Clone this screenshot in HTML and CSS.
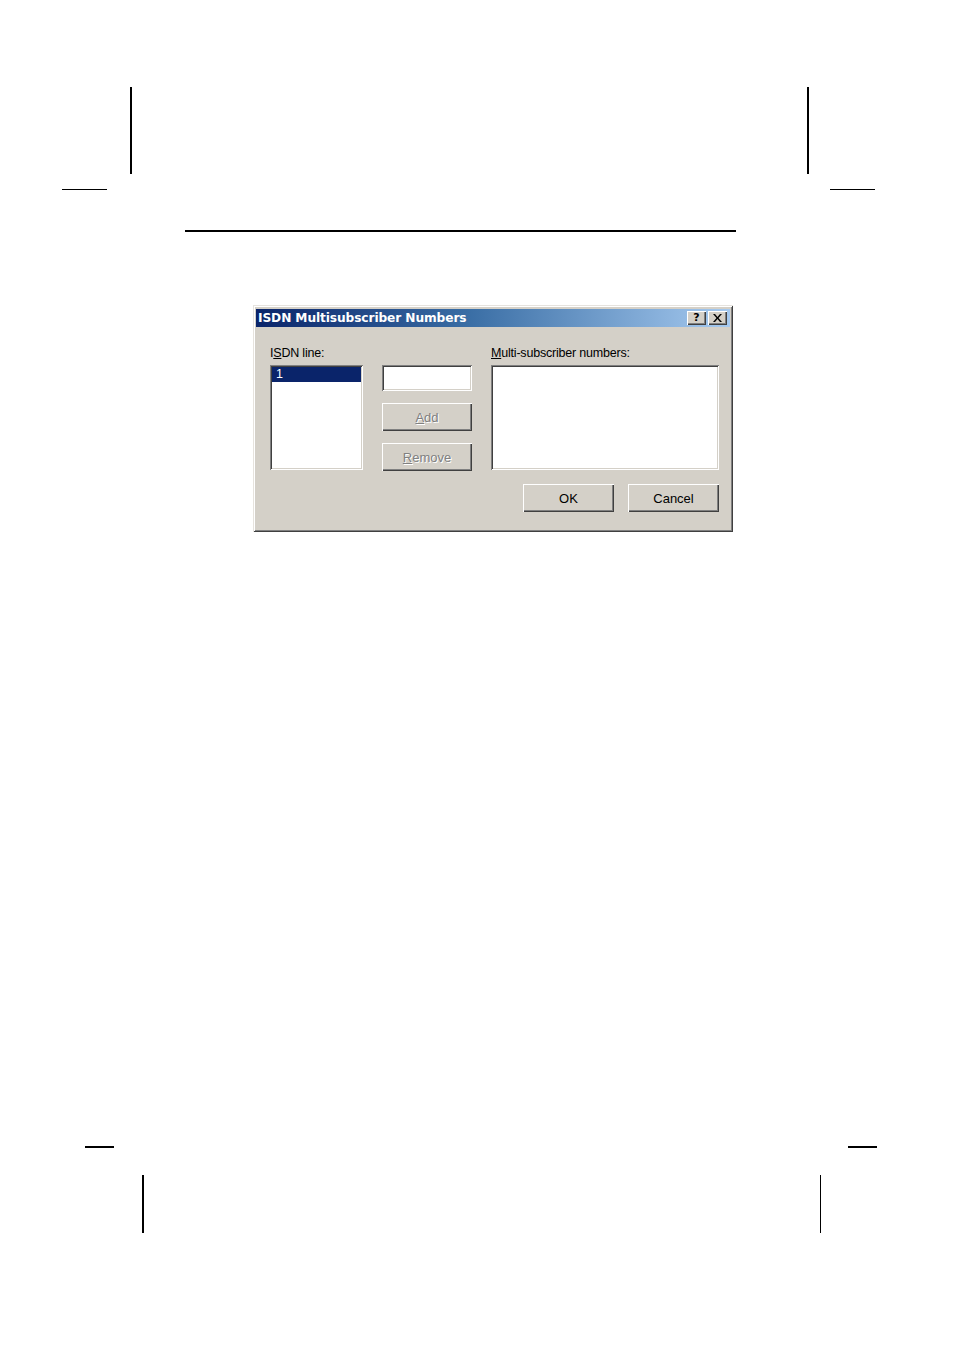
FILE: index.html
```html
<!DOCTYPE html>
<html>
<head>
<meta charset="utf-8">
<title>ISDN Multisubscriber Numbers</title>
<link rel="stylesheet" href="styles.css">
</head>
<body>
<div class="page">
  <div class="mark tl-v"></div>
  <div class="mark tl-h"></div>
  <div class="mark tr-v"></div>
  <div class="mark tr-h"></div>
  <div class="mark bl-h"></div>
  <div class="mark bl-v"></div>
  <div class="mark br-h"></div>
  <div class="mark br-v"></div>

  <div class="rule"></div>

  <div class="dialog">
    <div class="titlebar">
      <span class="title">ISDN Multisubscriber Numbers</span>
      <div class="caption-btns">
        <span class="cap-btn help">?</span>
        <span class="cap-btn close">
          <svg width="9" height="8" viewBox="0 0 9 8"><path d="M0 0h2l2.5 3 2.5-3h2l-3.5 4 3.5 4h-2l-2.5-3-2.5 3h-2l3.5-4z" fill="#000"/></svg>
        </span>
      </div>
    </div>
    <div class="body">
      <div class="cols">
        <div class="col col-line">
          <div class="label">I<u>S</u>DN line:</div>
          <div class="listbox small">
            <div class="item selected">1</div>
          </div>
        </div>
        <div class="col col-mid">
          <div class="textbox"></div>
          <div class="btn disabled"><span><u>A</u>dd</span></div>
          <div class="btn disabled"><span><u>R</u>emove</span></div>
        </div>
        <div class="col col-nums">
          <div class="label"><u>M</u>ulti-subscriber numbers:</div>
          <div class="listbox wide"></div>
        </div>
      </div>
      <div class="footer">
        <div class="btn action"><span>OK</span></div>
        <div class="btn action"><span>Cancel</span></div>
      </div>
    </div>
  </div>
</div>
</body>
</html>
```

FILE: styles.css
```css
html, body {
  margin: 0;
  padding: 0;
  background: #ffffff;
}

.page {
  position: relative;
  width: 954px;
  height: 1351px;
  padding-top: 230px;
  box-sizing: border-box;
  font-family: "Liberation Sans", Arial, sans-serif;
}

.mark {
  position: absolute;
  background: #000;
}
.tl-v { left: 130px; top: 87px; width: 1.5px; height: 87px; }
.tl-h { left: 62px; top: 188.5px; width: 45px; height: 1.5px; }
.tr-v { left: 807px; top: 87px; width: 1.5px; height: 87px; }
.tr-h { left: 830px; top: 188.5px; width: 45px; height: 1.5px; }
.bl-h { left: 85px; top: 1146px; width: 29px; height: 2px; }
.bl-v { left: 142px; top: 1175px; width: 2px; height: 58px; }
.br-h { left: 848px; top: 1146px; width: 29px; height: 2px; }
.br-v { left: 819.5px; top: 1175px; width: 1.5px; height: 58px; }

.rule {
  margin-left: 185px;
  width: 551px;
  height: 2px;
  background: #000;
}

.dialog {
  margin-top: 73px;
  margin-left: 253px;
  width: 480px;
  height: 227px;
  box-sizing: border-box;
  padding: 4px 3px 3px 3px;
  background: #d4d0c8;
  box-shadow:
    inset 1px 1px 0 #e6e3de,
    inset -1px -1px 0 #404040,
    inset 2px 2px 0 #ffffff,
    inset -2px -2px 0 #808080;
}

.titlebar {
  height: 18px;
  display: flex;
  align-items: center;
  justify-content: space-between;
  padding: 0 3px 0 2px;
  background: linear-gradient(to right, #0a246a 0%, #3a6ea5 45%, #a6caf0 100%);
}

.title {
  color: #ffffff;
  font-family: "DejaVu Sans", Verdana, sans-serif;
  font-weight: bold;
  font-size: 12.2px;
  letter-spacing: -0.1px;
  line-height: 18px;
  white-space: nowrap;
}

.caption-btns {
  display: flex;
  gap: 2px;
}

.cap-btn {
  width: 19px;
  height: 14px;
  box-sizing: border-box;
  background: #d4d0c8;
  display: flex;
  align-items: center;
  justify-content: center;
  box-shadow:
    inset 1px 1px 0 #ffffff,
    inset -1px -1px 0 #404040,
    inset -2px -2px 0 #808080;
  font-family: "DejaVu Sans", sans-serif;
  font-weight: bold;
  font-size: 11px;
  line-height: 14px;
  color: #000;
}

.body {
  padding: 19px 11px 0 14px;
}

.cols {
  display: flex;
  gap: 19px;
}

.col {
  display: flex;
  flex-direction: column;
}
.col-line { width: 93px; }
.col-mid { width: 90px; padding-top: 19px; gap: 12px; }
.col-nums { width: 228px; }

.label {
  font-size: 12.5px;
  line-height: 15px;
  height: 15px;
  margin-bottom: 4px;
  color: #000;
  white-space: nowrap;
  letter-spacing: -0.2px;
}

.label u, .btn u {
  text-decoration-thickness: 1px;
  text-underline-offset: 1px;
}

.listbox, .textbox {
  box-sizing: border-box;
  background: #ffffff;
  padding: 2px;
  box-shadow:
    inset 1px 1px 0 #808080,
    inset -1px -1px 0 #ffffff,
    inset 2px 2px 0 #404040,
    inset -2px -2px 0 #d4d0c8;
}

.listbox.small { height: 105px; }
.listbox.wide { height: 105px; }
.textbox { height: 26px; }

.item {
  height: 15px;
  line-height: 15px;
  font-size: 12.5px;
  padding-left: 4px;
}
.item.selected {
  background: #0a246a;
  color: #ffffff;
}

.btn {
  height: 28px;
  box-sizing: border-box;
  background: #d4d0c8;
  display: flex;
  align-items: center;
  justify-content: center;
  font-size: 13px;
  color: #000;
  box-shadow:
    inset 1px 1px 0 #ffffff,
    inset -1px -1px 0 #404040,
    inset -2px -2px 0 #808080;
}

.btn.disabled {
  color: #808080;
  text-shadow: 1px 1px 0 #ffffff;
}

.footer {
  display: flex;
  justify-content: flex-end;
  gap: 14px;
  margin-top: 13px;
}

.btn.action {
  width: 91px;
}
```
